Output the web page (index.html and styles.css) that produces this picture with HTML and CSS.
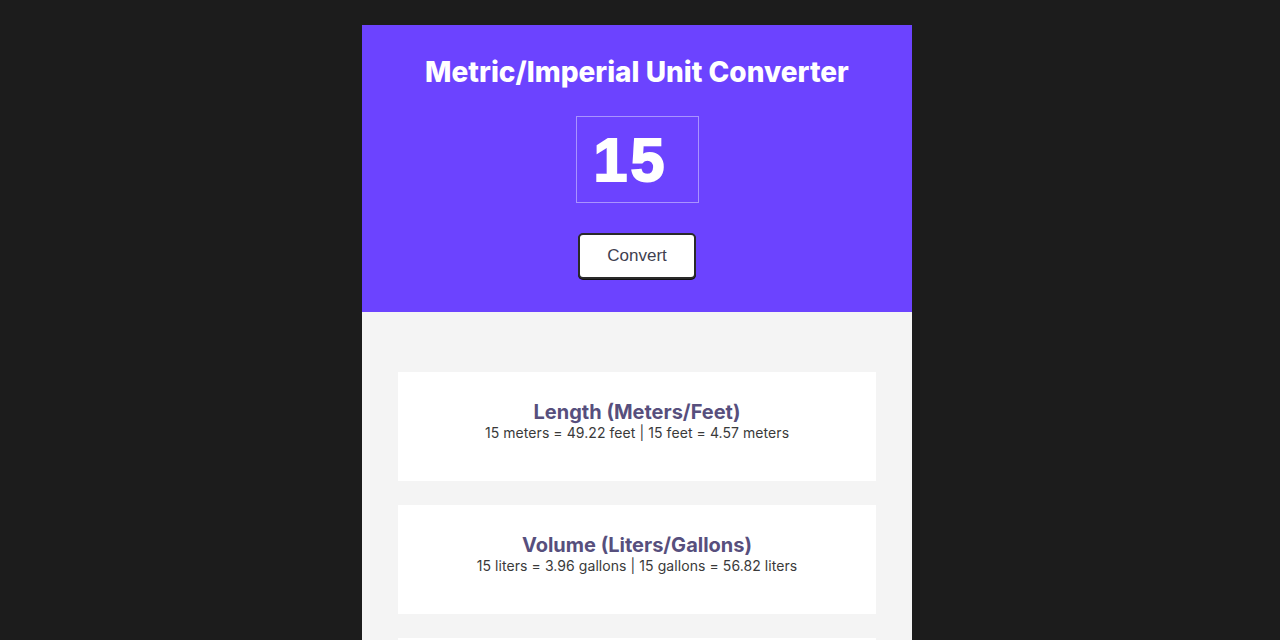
FILE: index.html
```html
<!DOCTYPE html>
<html lang="en">
<head>
<meta charset="utf-8">
<title>Metric/Imperial Unit Converter</title>
<link rel="stylesheet" href="styles.css">
</head>
<body>
<main class="app">
  <header class="hero">
    <h1 class="title">Metric/Imperial Unit Converter</h1>
    <input class="number" type="text" value="15">
    <button class="convert">Convert</button>
  </header>
  <section class="results">
    <div class="card">
      <h2 class="card-title">Length (Meters/Feet)</h2>
      <p class="card-text">15 meters = 49.22 feet | 15 feet = 4.57 meters</p>
    </div>
    <div class="card">
      <h2 class="card-title">Volume (Liters/Gallons)</h2>
      <p class="card-text">15 liters = 3.96 gallons | 15 gallons = 56.82 liters</p>
    </div>
    <div class="card">
      <h2 class="card-title">Mass (Kilograms/Pounds)</h2>
      <p class="card-text">15 kilos = 33.07 pounds | 15 pounds = 6.80 kilos</p>
    </div>
  </section>
</main>
</body>
</html>
```
FILE: styles.css
```css
* { box-sizing: border-box; }
html, body { margin: 0; padding: 0; }
body {
  background: #1c1c1c;
  font-family: Inter, "Noto Sans", sans-serif;
  padding: 25px 6px 0 0;
}
.app {
  width: 550px;
  margin: 0 auto;
}
.hero {
  background: #6c43ff;
  height: 287px;
  display: flex;
  flex-direction: column;
  align-items: center;
  padding-top: 30px;
}
.title {
  margin: 0;
  color: #fff;
  font-size: 28px;
  font-weight: 800;
  line-height: 34px;
}
.number {
  margin-top: 27px;
  width: 123px;
  height: 87px;
  background: transparent;
  border: 1px solid #a993ff;
  color: #fff;
  font-family: "Liberation Sans", Arial, sans-serif;
  font-weight: 700;
  font-size: 61px;
  letter-spacing: 3px;
  -webkit-text-stroke: 2px #fff;
  padding: 0 0 0 17px;
  outline: none;
}
.convert {
  margin-top: 30px;
  width: 118px;
  height: 46px;
  background: #fff;
  border: 2px solid #2a2a2a;
  border-radius: 5px;
  box-shadow: 0 1px 0 #111;
  font-family: "Liberation Sans", Arial, sans-serif;
  font-size: 17px;
  color: #3f3f50;
}
.results {
  background: #f4f4f4;
  padding: 60px 36px 24px;
  display: flex;
  flex-direction: column;
  gap: 24px;
}
.card {
  background: #fff;
  height: 109px;
  display: flex;
  flex-direction: column;
  align-items: center;
  justify-content: center;
  padding-bottom: 11px;
}
.card-title {
  margin: 0;
  color: #574f7d;
  font-size: 20px;
  font-weight: 700;
  line-height: 23px;
}
.card-text {
  margin: 0;
  color: #3a3a3a;
  font-size: 14px;
  line-height: 17px;
  letter-spacing: 0.07px;
}
```
